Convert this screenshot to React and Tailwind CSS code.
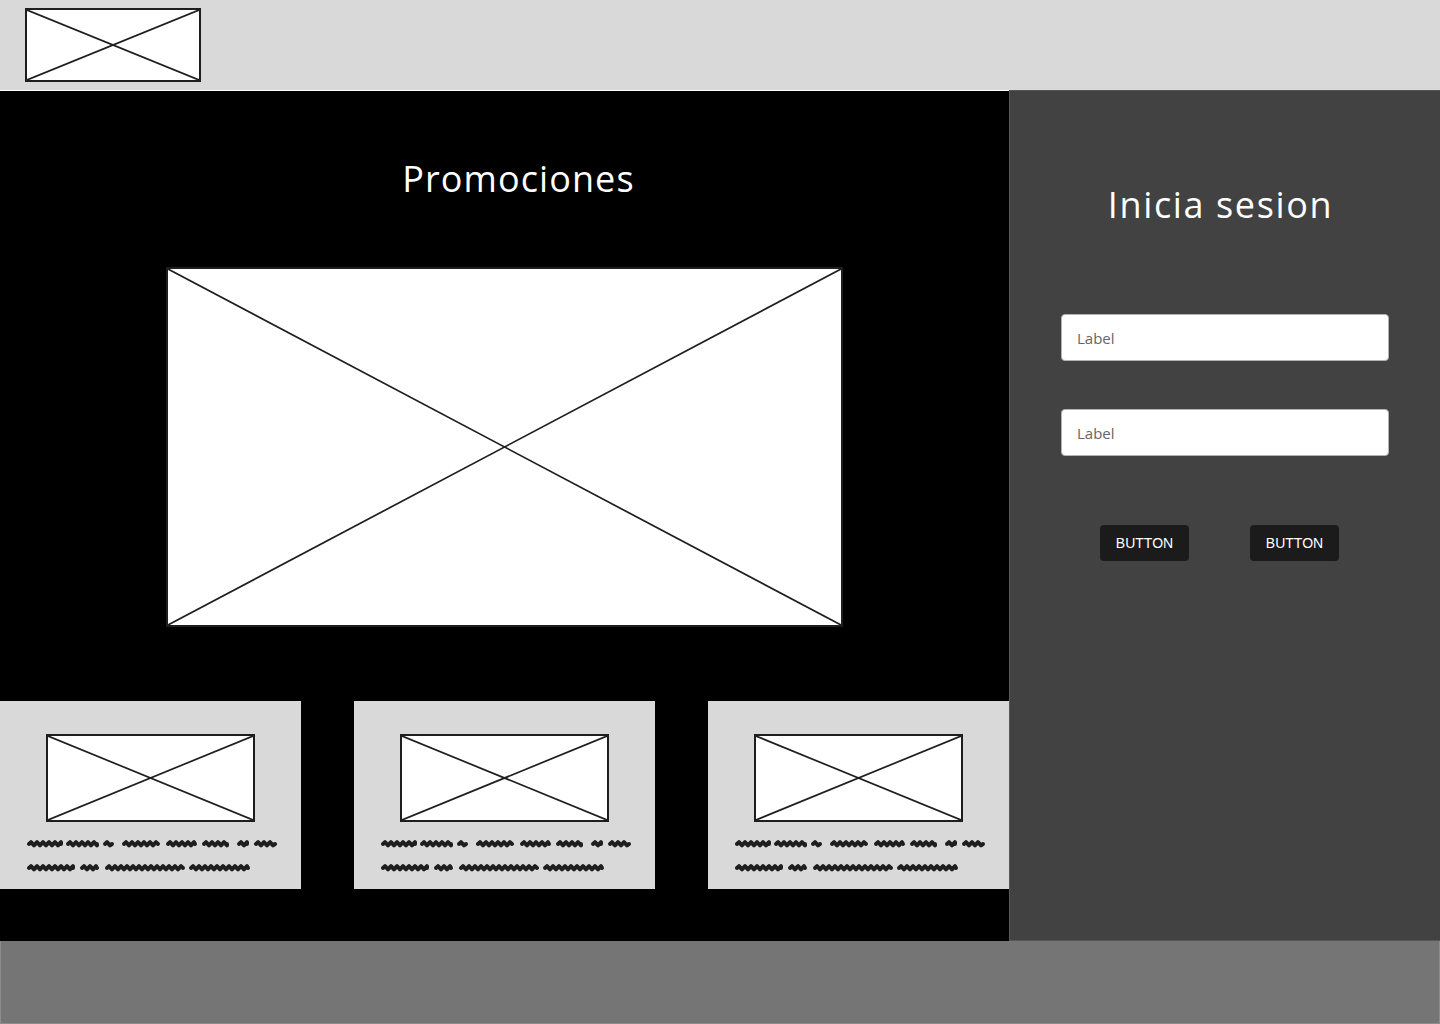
const lineOne = [
  [0, 36],
  [39, 72],
  [76, 87],
  [95, 133],
  [139, 170],
  [175, 202],
  [210, 222],
  [227, 250],
];

const lineTwo = [
  [0, 48],
  [53, 72],
  [78, 158],
  [162, 223],
];

function squiggle([start, end], y) {
  let d = `M ${start + 2} ${y}`;
  let up = true;
  for (let x = start + 4; x <= end - 2; x += 3) {
    d += ` L ${x} ${up ? y - 1.8 : y + 1.4}`;
    up = !up;
  }
  d += ` L ${end - 2} ${y}`;
  return d;
}

function Scribble() {
  return (
    <svg className="ml-[27px] mt-[14px] block" height="40" viewBox="0 0 260 40" width="260">
      {lineOne.map((word) => (
        <path
          d={squiggle(word, 8)}
          fill="none"
          key={`a${word[0]}`}
          stroke="#1e1e1e"
          strokeLinecap="round"
          strokeLinejoin="round"
          strokeWidth="4"
        />
      ))}
      {lineTwo.map((word) => (
        <path
          d={squiggle(word, 32)}
          fill="none"
          key={`b${word[0]}`}
          stroke="#1e1e1e"
          strokeLinecap="round"
          strokeLinejoin="round"
          strokeWidth="4"
        />
      ))}
    </svg>
  );
}

function Placeholder({ className }) {
  return (
    <div className={`relative border-2 border-[#1e1e1e] bg-white ${className}`}>
      <svg className="absolute inset-0 h-full w-full" preserveAspectRatio="none" viewBox="0 0 100 100">
        <line stroke="#1e1e1e" strokeWidth="1.7" vectorEffect="non-scaling-stroke" x1="0" x2="100" y1="0" y2="100" />
        <line stroke="#1e1e1e" strokeWidth="1.7" vectorEffect="non-scaling-stroke" x1="0" x2="100" y1="100" y2="0" />
      </svg>
    </div>
  );
}

function PromoCard() {
  return (
    <article className="h-[188px] w-[301px] bg-[#d9d9d9] pt-[33px]">
      <Placeholder className="ml-[46px] h-[88px] w-[209px]" />
      <Scribble />
    </article>
  );
}

function LoginPanel() {
  return (
    <aside className="flex flex-1 flex-col border-l border-t border-b border-[#575757] bg-[#424242] pt-[96px]">
      <h2 className="pr-[9px] text-center text-[36px] font-medium leading-none tracking-[0.045em] text-white">
        Inicia sesion
      </h2>

      <div className="mt-[91px] flex flex-col gap-[48px] pl-[51px]">
        <input
          className="h-[47px] w-[328px] rounded-[4px] border border-[#b3b3b3] bg-white pl-[15px] text-[15px] text-[#666] outline-none placeholder:text-[#666]"
          placeholder="Label"
          type="text"
        />
        <input
          className="h-[47px] w-[328px] rounded-[4px] border border-[#b3b3b3] bg-white pl-[15px] text-[15px] text-[#666] outline-none placeholder:text-[#666]"
          placeholder="Label"
          type="password"
        />
      </div>

      <div className="mt-[69px] flex gap-[61px] pl-[90px]">
        <button
          className="h-[36px] w-[89px] rounded-[4px] bg-[#1b1b1b] font-['Liberation_Sans',sans-serif] text-[14px] text-white"
          type="button"
        >
          BUTTON
        </button>
        <button
          className="h-[36px] w-[89px] rounded-[4px] bg-[#1b1b1b] font-['Liberation_Sans',sans-serif] text-[14px] text-white"
          type="button"
        >
          BUTTON
        </button>
      </div>
    </aside>
  );
}

export default function App() {
  return (
    <div className="flex h-[1024px] w-[1440px] flex-col overflow-hidden bg-white font-['Open_Sans',sans-serif]">
      <header className="h-[90px] bg-[#d9d9d9] pl-[25px] pt-[8px]">
        <Placeholder className="h-[74px] w-[176px]" />
      </header>

      <main className="flex h-[851px]">
        <section className="flex w-[1009px] flex-col border-t border-white bg-black pt-[70px]">
          <h1 className="pl-[28px] text-center text-[36px] font-medium leading-none tracking-[0.03em] text-white">
            Promociones
          </h1>
          <Placeholder className="ml-[166px] mt-[70px] h-[360px] w-[677px]" />
          <div className="mt-[74px] flex justify-between">
            <PromoCard />
            <PromoCard />
            <PromoCard />
          </div>
        </section>
        <LoginPanel />
      </main>

      <footer className="h-[83px] border-x border-b border-[#8c8c8c] bg-[#757575]" />
    </div>
  );
}
